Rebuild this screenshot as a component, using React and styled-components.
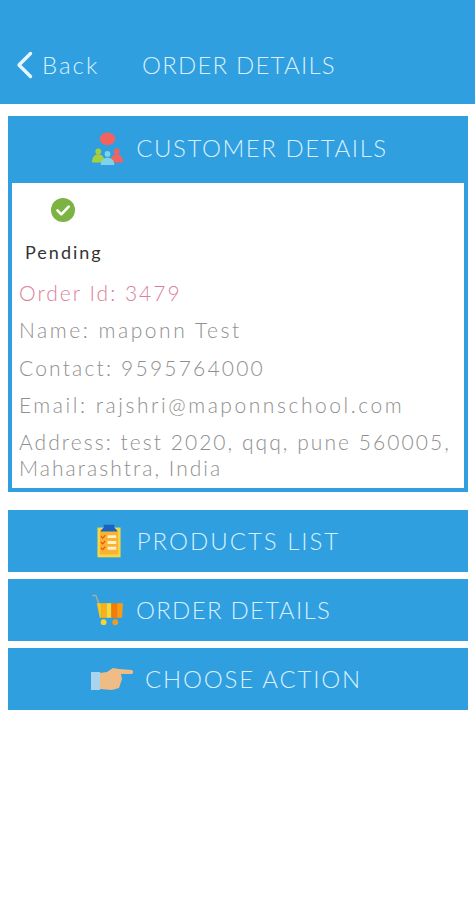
import React from 'react'
import styled, { createGlobalStyle } from 'styled-components'

const GlobalStyle = createGlobalStyle`
  html, body {
    margin: 0;
    padding: 0;
    background: #fff;
    font-family: "Lato", "Open Sans", sans-serif;
  }
`

const BLUE = '#2f9fe0'

const Page = styled.div`
  width: 475px;
  height: 900px;
  overflow: hidden;
  background: #fff;
`

const Header = styled.header`
  height: 104px;
  box-sizing: border-box;
  padding: 48px 0 0 16px;
  background: ${BLUE};
  display: flex;
  align-items: flex-start;
  color: #d8f0fd;
  font-weight: 300;
  font-size: 24px;
  line-height: 34px;
  letter-spacing: 1.2px;
`

const BackLink = styled.div`
  display: flex;
  align-items: center;
  gap: 9px;
  width: 126px;
  letter-spacing: 2px;
`

const Sections = styled.main`
  padding: 12px 7px 0 8px;
  display: flex;
  flex-direction: column;
`

const Card = styled.section`
  border: 4px solid ${BLUE};
  border-top: 0;
  margin-bottom: 18px;
`

const SectionBar = styled.div`
  height: ${p => p.$height || 62}px;
  margin: ${p => p.$inCard ? '0 -4px' : '0 0 7px'};
  background: ${BLUE};
  display: flex;
  align-items: center;
  justify-content: center;
  gap: ${p => p.$gap || 12}px;
  padding-right: ${p => p.$shift || 0}px;
  padding-left: ${p => p.$inCard ? 4 : 0}px;
  color: #d8f0fd;
  font-weight: 300;
  font-size: 24px;
  letter-spacing: ${p => p.$spacing || 1.56}px;
`

const BarLabel = styled.span`
  margin-top: ${p => p.$raised ? -4 : -1}px;
`

const CardBody = styled.div`
  padding: 15px 7px 7px;
`

const Status = styled.div`
  padding-left: 6px;
  margin-bottom: 14px;
`

const StatusIcon = styled.div`
  width: 24px;
  height: 24px;
  margin: 0 0 18px 26px;
`

const StatusLabel = styled.div`
  font-size: 18px;
  line-height: 24px;
  letter-spacing: 2px;
  color: #333;
`

const OrderId = styled.div`
  font-size: 21px;
  line-height: 29px;
  letter-spacing: 2px;
  font-weight: 300;
  color: #dc7f9b;
  margin-bottom: 9px;
`

const Info = styled.div`
  font-size: 21px;
  line-height: 28px;
  letter-spacing: ${p => p.$spacing || 2.55}px;
  font-weight: 300;
  color: #8f8f8f;
  margin-bottom: ${p => p.$last ? 0 : 9.5}px;
`

const Address = styled(Info)`
  line-height: 26px;
  letter-spacing: 2.05px;
`

const CheckIcon = () => (
  <svg width="24" height="24" viewBox="0 0 24 24">
    <circle cx="12" cy="12" r="12" fill="#7cb342" />
    <path d="M6.5 12.5l3.8 3.8 7.4-7.6" fill="none" stroke="#fff" strokeWidth="2.6" strokeLinecap="round" strokeLinejoin="round" />
  </svg>
)

const ChevronIcon = () => (
  <svg width="17" height="28" viewBox="0 0 17 28">
    <path d="M14.5 2.5 3 14l11.5 11.5" fill="none" stroke="#e6f6ff" strokeWidth="3.4" strokeLinecap="round" strokeLinejoin="round" />
  </svg>
)

const PeopleIcon = () => (
  <svg width="31" height="36" viewBox="0 0 32 36">
    <ellipse cx="16" cy="6.5" rx="8" ry="6.5" fill="#f2635f" />
    <circle cx="6.5" cy="19.5" r="3" fill="#a5cf3f" />
    <path d="M0 31c0-6 3-8.500 6.500-8.500S13 25 13 31z" fill="#a5cf3f" />
    <circle cx="25.500" cy="19.500" r="3" fill="#f2635f" />
    <path d="M19 31c0-6 3-8.500 6.500-8.500S32 25 32 31z" fill="#f2635f" />
    <circle cx="16" cy="22" r="3" fill="#7fd3e6" />
    <path d="M9 33.500c0-5.500 3-7.500 7-7.500s7 2 7 7.500z" fill="#7fd3e6" />
  </svg>
)

const ClipboardIcon = () => (
  <svg width="25" height="34" viewBox="0 0 26 34">
    <rect x="0.500" y="3" width="24" height="31" fill="#f6d743" />
    <rect x="3" y="6" width="19" height="25" fill="#f9b233" />
    <path d="M7 0h11v3l3 3v1H4V6l3-3z" fill="#1565c0" />
    <path d="M4 12l2 2 2.500-3M4 18l2 2 2.500-3M4 24l2 2 2.500-3" fill="none" stroke="#e8590c" strokeWidth="1.300" />
    <path d="M11 12.500h9M11 18.500h9M11 24.500h9" stroke="#fff3c4" strokeWidth="3" />
  </svg>
)

const CartIcon = () => (
  <svg width="33" height="34" viewBox="0 0 34 34">
    <path d="M1 2h4l4 11" fill="none" stroke="#a9a9a0" strokeWidth="1.500" />
    <path d="M6 10h5v15H9z" fill="#fec41c" />
    <rect x="11" y="10" width="5" height="15" fill="#fbb017" />
    <rect x="16" y="10" width="5" height="15" fill="#fdd835" />
    <rect x="21" y="10" width="6" height="15" fill="#f57c00" />
    <path d="M27 10h6l-1 15h-5z" fill="#fb9a15" />
    <circle cx="13" cy="29.500" r="3" fill="#f7d333" />
    <circle cx="25" cy="29.500" r="3" fill="#f59a1b" />
  </svg>
)

const PointingIcon = () => (
  <svg width="42" height="24" viewBox="0 0 42 24">
    <rect x="0" y="5" width="9" height="18" fill="#a8d4ef" />
    <path d="M9 6l7-1 6-4 6 1 13 1c1.500 1 1.500 3 0 4H30l1 5-3 9-7 2-12-1z" fill="#efbc85" />
  </svg>
)

const App = () => {
  return (
    <Page>
      <GlobalStyle />
      <Header>
        <BackLink>
          <ChevronIcon />
          Back
        </BackLink>
        ORDER DETAILS
      </Header>
      <Sections>
        <Card>
          <SectionBar $inCard $height={67} $gap={13}>
            <PeopleIcon />
            <BarLabel $raised>CUSTOMER DETAILS</BarLabel>
          </SectionBar>
          <CardBody>
            <Status>
              <StatusIcon><CheckIcon /></StatusIcon>
              <StatusLabel>Pending</StatusLabel>
            </Status>
            <OrderId>Order Id: 3479</OrderId>
            <Info>Name: maponn Test</Info>
            <Info $spacing={2.2}>Contact: 9595764000</Info>
            <Info>Email: rajshri@maponnschool.com</Info>
            <Address $last>Address: test 2020, qqq, pune 560005, Maharashtra, India</Address>
          </CardBody>
        </Card>
        <SectionBar $gap={15} $shift={39} $spacing={2}>
          <ClipboardIcon />
          <BarLabel>PRODUCTS LIST</BarLabel>
        </SectionBar>
        <SectionBar $gap={12} $shift={54} $spacing={1.3}>
          <CartIcon />
          <BarLabel>ORDER DETAILS</BarLabel>
        </SectionBar>
        <SectionBar $gap={12} $shift={23} $spacing={1.8}>
          <PointingIcon />
          <BarLabel>CHOOSE ACTION</BarLabel>
        </SectionBar>
      </Sections>
    </Page>
  )
}

export default App
